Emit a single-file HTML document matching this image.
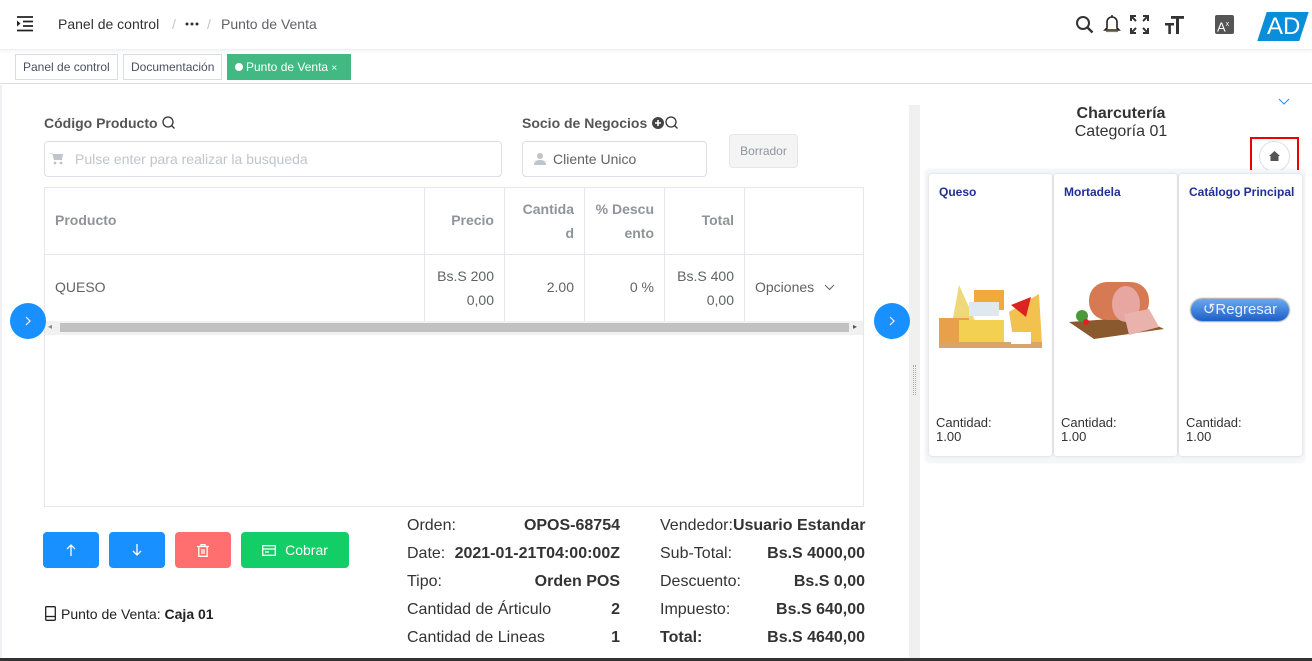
<!DOCTYPE html>
<html><head><meta charset="utf-8"><style>
*{box-sizing:border-box;margin:0;padding:0}
body{width:1312px;height:661px;overflow:hidden;font-family:"Liberation Sans",sans-serif;background:#fff;position:relative;color:#333}
.a{position:absolute}
.hdr{left:0;top:0;width:1312px;height:50px;border-bottom:1px solid #f0f0f0;box-shadow:0 1px 4px rgba(0,0,0,.06)}
.tab{position:absolute;top:54px;height:26px;border:1px solid #d8dce5;font-size:12px;line-height:24px;padding:0 7px;color:#495060;background:#fff}
.th{position:absolute;font-weight:bold;color:#909399;font-size:14px;text-align:right;line-height:24px}
.td{position:absolute;font-size:14px;color:#606266;text-align:right;line-height:24px}
.btn{position:absolute;top:532px;height:36px;border-radius:4px;color:#fff;font-size:14px;display:flex;align-items:center;justify-content:center}
.s{position:absolute;font-size:16px;color:#333;line-height:20px;white-space:nowrap}
.b{font-weight:bold}
.card{position:absolute;top:174px;width:123px;height:282px;background:#fff;border-radius:3px;box-shadow:0 0 3px rgba(0,0,0,.15)}
.card .t{position:absolute;left:10px;top:11px;font-size:12px;font-weight:bold;color:#1f2f98}
.card .q{position:absolute;left:7px;top:242px;font-size:13px;color:#333;line-height:14px}
.circ{position:absolute;width:36px;height:36px;border-radius:50%;background:#1890ff}
</style></head><body>
<div class="a hdr"></div>
<svg class="a" style="left:16px;top:16px" width="18" height="16"><path d="M1 1h16M7 5.5h10M7 10h10M1 14.5h16" stroke="#222" stroke-width="1.8"/><path d="M1 4.5l3.5 3-3.5 3z" fill="#222"/></svg>
<div class="a" style="left:58px;top:16px;font-size:14px;color:#303133">Panel de control</div>
<div class="a" style="left:172px;top:16px;font-size:14px;color:#c0c4cc">/</div>
<svg class="a" style="left:185px;top:22px" width="14" height="4"><circle cx="2" cy="2" r="1.5" fill="#303133"/><circle cx="7" cy="2" r="1.5" fill="#303133"/><circle cx="12" cy="2" r="1.5" fill="#303133"/></svg>
<div class="a" style="left:207px;top:16px;font-size:14px;color:#c0c4cc">/</div>
<div class="a" style="left:221px;top:16px;font-size:14px;color:#606266">Punto de Venta</div>
<svg class="a" style="left:1075px;top:15px" width="20" height="20"><circle cx="8" cy="8" r="6" fill="none" stroke="#333" stroke-width="2"/><path d="M12.5 12.5l5 5" stroke="#333" stroke-width="2.4"/></svg>
<svg class="a" style="left:1103px;top:14px" width="18" height="20"><path d="M4 14V8a5 5 0 0110 0v6l2 2H2z" fill="none" stroke="#222" stroke-width="1.6"/><path d="M3 17.5h12" stroke="#c60" stroke-width="1.2"/><path d="M9 1v2" stroke="#222" stroke-width="1.5"/></svg>
<svg class="a" style="left:1130px;top:15px" width="19" height="19" stroke="#333" stroke-width="2" fill="none"><path d="M1 6V1h5M13 1h5v5M18 13v5h-5M6 18H1v-5M1 1l5 5M18 1l-5 5M18 18l-5-5M1 18l5-5"/></svg>
<svg class="a" style="left:1164px;top:16px" width="20" height="18" fill="#333"><rect x="1" y="7" width="9" height="2.5"/><rect x="4.3" y="7" width="2.6" height="11"/><rect x="7" y="0" width="13" height="2.8"/><rect x="12" y="0" width="3" height="18"/></svg>
<div class="a" style="left:1215px;top:15px;width:19px;height:19px;background:#555;border-radius:2px;color:#fff;font-size:13px;line-height:19px;padding-left:2px">A<sup style="font-size:7px">x</sup></div>
<div class="a" style="left:1262px;top:12px;width:42px;height:29px;background:#0a8ed9;transform:skewX(-18deg)"></div>
<div class="a" style="left:1267px;top:12px;font-size:24px;color:#fff;line-height:29px">AD</div>
<div class="a" style="left:0;top:50px;width:1312px;height:34px;border-bottom:1px solid #d8dce5"></div>
<div class="tab" style="left:15px">Panel de control</div>
<div class="tab" style="left:123px">Documentación</div>
<div class="tab" style="left:227px;width:124px;background:#42b983;border-color:#42b983;color:#fff;padding-left:7px"><span style="display:inline-block;width:8px;height:8px;border-radius:50%;background:#fff;margin-right:3px"></span>Punto de Venta <span style="font-size:10px">×</span></div>
<div class="a" style="left:0;top:85px;width:2px;height:576px;background:#eef0f5"></div>
<div class="a" style="left:909px;top:105px;width:11px;height:556px;background:#f0f0f0"></div>
<div class="a" style="left:913px;top:365px;width:3px;height:30px;border-left:1px dotted #aaa;border-right:1px dotted #aaa"></div>
<div class="a" style="left:44px;top:115px;font-size:14px;font-weight:bold;color:#555">Código Producto</div>
<svg class="a" style="left:162px;top:116px" width="14" height="14" fill="none" stroke="#333" stroke-width="1.3"><circle cx="6" cy="6" r="5"/><path d="M9.5 9.5l3 3"/></svg>
<div class="a" style="left:44px;top:141px;width:458px;height:36px;border:1px solid #dcdfe6;border-radius:4px"></div>
<svg class="a" style="left:49px;top:152px" width="14" height="13"><path d="M0 1h3l2 7h8l1-6H4" fill="#c0c4cc"/><circle cx="6" cy="11" r="1.4" fill="#c0c4cc"/><circle cx="12" cy="11" r="1.4" fill="#c0c4cc"/></svg>
<div class="a" style="left:75px;top:151px;font-size:14px;color:#c0c4cc">Pulse enter para realizar la busqueda</div>
<div class="a" style="left:522px;top:115px;font-size:14px;font-weight:bold;color:#555">Socio de Negocios</div>
<svg class="a" style="left:652px;top:116px" width="28" height="14"><circle cx="6" cy="7" r="6" fill="#444"/><path d="M6 4v6M3 7h6" stroke="#fff" stroke-width="1.6"/><circle cx="19" cy="6" r="5" fill="none" stroke="#333" stroke-width="1.3"/><path d="M22.5 9.5l3 3" stroke="#333" stroke-width="1.3"/></svg>
<div class="a" style="left:522px;top:141px;width:185px;height:36px;border:1px solid #dcdfe6;border-radius:4px"></div>
<svg class="a" style="left:534px;top:152px" width="12" height="13"><circle cx="6" cy="4" r="3" fill="#c0c4cc"/><path d="M0 13c0-4 3-5 6-5s6 1 6 5z" fill="#c0c4cc"/></svg>
<div class="a" style="left:553px;top:151px;font-size:14px;color:#606266">Cliente Unico</div>
<div class="a" style="left:729px;top:134px;width:69px;height:34px;background:#f4f4f5;border:1px solid #e4e7ed;border-radius:4px;font-size:12px;color:#909399;text-align:center;line-height:32px">Borrador</div>
<div class="a" style="left:44px;top:187px;width:820px;height:320px;border:1px solid #e4e7ed"></div>
<div class="a" style="left:44px;top:254px;width:820px;height:1px;background:#e4e7ed"></div>
<div class="a" style="left:44px;top:321px;width:820px;height:1px;background:#e4e7ed"></div>
<div class="a" style="left:424px;top:187px;width:1px;height:134px;background:#e4e7ed"></div>
<div class="a" style="left:504px;top:187px;width:1px;height:134px;background:#e4e7ed"></div>
<div class="a" style="left:584px;top:187px;width:1px;height:134px;background:#e4e7ed"></div>
<div class="a" style="left:664px;top:187px;width:1px;height:134px;background:#e4e7ed"></div>
<div class="a" style="left:744px;top:187px;width:1px;height:134px;background:#e4e7ed"></div>
<div class="th" style="left:55px;top:208px;text-align:left">Producto</div>
<div class="th" style="left:424px;top:208px;width:70px">Precio</div>
<div class="th" style="left:504px;top:197px;width:70px">Cantida<br>d</div>
<div class="th" style="left:584px;top:197px;width:70px">% Descu<br>ento</div>
<div class="th" style="left:664px;top:208px;width:70px">Total</div>
<div class="td" style="left:55px;top:275px;text-align:left">QUESO</div>
<div class="td" style="left:424px;top:264px;width:70px">Bs.S 200<br>0,00</div>
<div class="td" style="left:504px;top:275px;width:70px">2.00</div>
<div class="td" style="left:584px;top:275px;width:70px">0 %</div>
<div class="td" style="left:664px;top:264px;width:70px">Bs.S 400<br>0,00</div>
<div class="td" style="left:755px;top:275px;text-align:left">Opciones</div>
<svg class="a" style="left:824px;top:284px" width="11" height="7"><path d="M1 1l4.5 4.5L10 1" fill="none" stroke="#606266" stroke-width="1"/></svg>
<div class="a" style="left:45px;top:321px;width:818px;height:14px;background:#f1f1f1"></div>
<div class="a" style="left:60px;top:323px;width:789px;height:9px;background:#c1c1c1"></div>
<div class="a" style="left:48px;top:322px;font-size:8px;color:#888">◂</div>
<div class="a" style="left:853px;top:322px;font-size:8px;color:#555">▸</div>
<div class="circ" style="left:10px;top:303px"></div>
<svg class="a" style="left:25px;top:316px" width="6" height="10"><path d="M1 1l4 4-4 4" fill="none" stroke="#fff" stroke-width="1.2"/></svg>
<div class="circ" style="left:874px;top:303px"></div>
<svg class="a" style="left:889px;top:316px" width="6" height="10"><path d="M1 1l4 4-4 4" fill="none" stroke="#fff" stroke-width="1.2"/></svg>
<div class="btn" style="left:43px;width:56px;background:#1890ff"><svg width="10" height="12" fill="none" stroke="#fff" stroke-width="1.3"><path d="M5 12V1M1 5l4-4 4 4"/></svg></div>
<div class="btn" style="left:109px;width:56px;background:#1890ff"><svg width="10" height="12" fill="none" stroke="#fff" stroke-width="1.3"><path d="M5 0v11M1 7l4 4 4-4"/></svg></div>
<div class="btn" style="left:175px;width:56px;background:#ff6f6f"><svg width="12" height="13" fill="none" stroke="#fff" stroke-width="1.3"><path d="M0 2.5h12M4 2.5V.7h4v1.8M1.8 2.5v9.8h8.4V2.5M5 5v5M7 5v5"/></svg></div>
<div class="btn" style="left:241px;width:108px;background:#13ce66"><svg width="14" height="11" fill="none" stroke="#fff" stroke-width="1.3" style="margin-right:9px"><rect x=".7" y=".7" width="12.6" height="9.6"/><path d="M1 4h12M3 7h4"/></svg>Cobrar</div>
<svg class="a" style="left:45px;top:606px" width="11" height="15" fill="none" stroke="#222" stroke-width="1.3"><rect x=".7" y=".7" width="9.6" height="13.6" rx="1"/><path d="M1 10.5h9"/></svg>
<div class="a" style="left:61px;top:606px;font-size:14px;color:#222">Punto de Venta: <b>Caja 01</b></div>
<div class="s" style="left:407px;top:516px">Orden:</div><div class="s b" style="left:440px;top:516px;width:180px;text-align:right">OPOS-68754</div>
<div class="s" style="left:407px;top:544px">Date:</div><div class="s b" style="left:440px;top:544px;width:180px;text-align:right">2021-01-21T04:00:00Z</div>
<div class="s" style="left:407px;top:572px">Tipo:</div><div class="s b" style="left:440px;top:572px;width:180px;text-align:right">Orden POS</div>
<div class="s" style="left:407px;top:600px">Cantidad de Árticulo</div><div class="s b" style="left:560px;top:600px;width:60px;text-align:right">2</div>
<div class="s" style="left:407px;top:628px">Cantidad de Lineas</div><div class="s b" style="left:560px;top:628px;width:60px;text-align:right">1</div>
<div class="s" style="left:660px;top:516px">Vendedor:<b>Usuario Estandar</b></div>
<div class="s" style="left:660px;top:544px">Sub-Total:</div><div class="s b" style="left:745px;top:544px;width:120px;text-align:right">Bs.S 4000,00</div>
<div class="s" style="left:660px;top:572px">Descuento:</div><div class="s b" style="left:745px;top:572px;width:120px;text-align:right">Bs.S 0,00</div>
<div class="s" style="left:660px;top:600px">Impuesto:</div><div class="s b" style="left:745px;top:600px;width:120px;text-align:right">Bs.S 640,00</div>
<div class="s b" style="left:660px;top:628px">Total:</div><div class="s b" style="left:745px;top:628px;width:120px;text-align:right">Bs.S 4640,00</div>
<div class="a" style="left:0;top:658px;width:1312px;height:3px;background:#333"></div>
<div class="a" style="left:1020px;top:105px;width:202px;text-align:center;font-size:16px;font-weight:bold;color:#333">Charcutería</div>
<div class="a" style="left:1020px;top:123px;width:202px;text-align:center;font-size:16px;color:#333">Categoría 01</div>
<svg class="a" style="left:1278px;top:98px" width="12" height="8"><path d="M1 1l5 5 5-5" fill="none" stroke="#1890ff" stroke-width="1"/></svg>
<div class="a" style="left:1250px;top:137px;width:49px;height:37px;border:2px solid #e00"></div>
<div class="a" style="left:1259px;top:141px;width:31px;height:31px;border:1px solid #dcdfe6;border-radius:50%"></div>
<svg class="a" style="left:1269px;top:151px" width="11" height="10"><path d="M5.5 0L11 5H9.5v5h-8V5H0z" fill="#555"/></svg>
<div class="a" style="left:926px;top:170px;width:378px;height:292px;background:#f5f6fa;border-radius:3px;box-shadow:0 0 3px rgba(0,0,0,.1)"></div>
<div class="card" style="left:929px"><div class="t">Queso</div>
<svg class="a" style="left:10px;top:106px" width="103" height="68"><rect width="103" height="68" fill="#fff"/><path d="M10 60L20 5l18 40z" fill="#f0d77a"/><rect x="35" y="10" width="30" height="20" fill="#f2a93b"/><rect x="30" y="22" width="30" height="14" fill="#dfe8ee"/><path d="M70 32l30-18 3 50-28 0z" fill="#f3c14e"/><path d="M72 25l20-8-5 20z" fill="#d22"/><rect x="0" y="38" width="30" height="30" fill="#e8a04a"/><rect x="20" y="40" width="45" height="28" fill="#f3d052"/><rect x="0" y="62" width="103" height="6" fill="#d9a468"/><rect x="72" y="52" width="20" height="12" fill="#fff"/></svg>
<div class="q">Cantidad:<br>1.00</div></div>
<div class="card" style="left:1054px"><div class="t">Mortadela</div>
<svg class="a" style="left:10px;top:108px" width="103" height="58"><rect width="103" height="58" fill="#fff"/><path d="M5 40l70-5 25 12-70 10z" fill="#8a5a2e"/><rect x="25" y="0" width="60" height="38" rx="18" fill="#d67a54"/><ellipse cx="62" cy="22" rx="14" ry="18" fill="#e8a6a0"/><path d="M60 32l25-5 10 18-30 8z" fill="#eab2ad"/><circle cx="18" cy="34" r="6" fill="#4a9a3a"/><circle cx="22" cy="40" r="3" fill="#d22"/></svg>
<div class="q">Cantidad:<br>1.00</div></div>
<div class="card" style="left:1179px"><div class="t">Catálogo Principal</div>
<div class="a" style="left:12px;top:125px;width:98px;height:22px;border-radius:11px;background:linear-gradient(#6aa8f0,#1c5fc8);color:#e8f0ff;font-size:15px;line-height:22px;text-align:center;box-shadow:0 0 2px #123">↺Regresar</div>
<div class="q">Cantidad:<br>1.00</div></div>
</body></html>
